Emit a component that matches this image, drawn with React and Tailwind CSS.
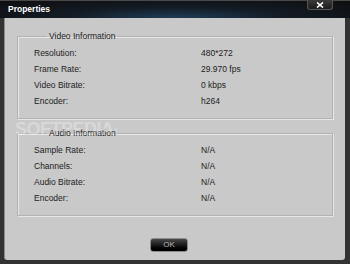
import React from "react";

const videoInfo = [
  { label: "Resolution:", value: "480*272" },
  { label: "Frame Rate:", value: "29.970 fps" },
  { label: "Video Bitrate:", value: "0 kbps" },
  { label: "Encoder:", value: "h264" },
];

const audioInfo = [
  { label: "Sample Rate:", value: "N/A" },
  { label: "Channels:", value: "N/A" },
  { label: "Audio Bitrate:", value: "N/A" },
  { label: "Encoder:", value: "N/A" },
];

const InfoGroup = ({ title, rows, className = "" }) => (
  <fieldset
    className={`h-[88px] border border-[#b2b2b2] shadow-[inset_1px_1px_0_#e6e6e6,1px_1px_0_#e6e6e6] pl-[16px] ${className}`}
  >
    <legend className="ml-[13px] px-[2px] h-[10px] leading-[10px] text-[8.5px] text-[#1c1c1c]">
      {title}
    </legend>
    <div className="pt-[4px]">
      {rows.map((r) => (
        <div key={r.label} className="flex h-[16px] items-center text-[8.5px] text-[#1c1c1c]">
          <span className="w-[167px]">{r.label}</span>
          <span>{r.value}</span>
        </div>
      ))}
    </div>
  </fieldset>
);

export default function App() {
  return (
    <div
      className="relative w-[350px] h-[264px] bg-[#333333] flex flex-col overflow-hidden"
      style={{ fontFamily: '"Liberation Sans", Arial, sans-serif' }}
    >
      {/* Title bar */}
      <div className="h-[18px] flex justify-between bg-[radial-gradient(ellipse_at_50%_100%,#1f3d57_0%,#131b24_45%,#0e0e0f_100%)] border-t border-[#4a4a4a]">
        <span className="pl-[8px] pt-[3px] text-[8.5px] font-bold text-white leading-[10px]">
          Properties
        </span>
        <button className="mr-[17px] w-[26px] h-[10px] -mt-px rounded-b-[3px] bg-gradient-to-b from-[#3a3a3a] to-[#1c1c1c] border border-t-0 border-[#555] flex items-center justify-center">
          <svg width="8" height="6" viewBox="0 0 8 6">
            <path d="M1 0.5 L7 5.5 M7 0.5 L1 5.5" stroke="#fff" strokeWidth="1.6" />
          </svg>
        </button>
      </div>

      {/* Body */}
      <div className="ml-[4px] mr-[5px] h-[242px] bg-[#c9c9c9] rounded-b-[3px] border-l border-[#8a8a8a] px-[12px] pt-[13px] flex flex-col">
        <InfoGroup title="Video Information" rows={videoInfo} />
        <InfoGroup title="Audio Information" rows={audioInfo} className="mt-[9px]" />
        <div className="mt-[14px]">
          <button className="ml-[133px] w-[38px] h-[14px] rounded-[3px] bg-gradient-to-b from-[#4a4a4a] via-[#1a1a1a] to-[#000] border border-[#8c8c8c] text-[8px] leading-[12px] text-[#b5b5b5]">
            OK
          </button>
        </div>
      </div>

      {/* watermark */}
      <div className="absolute left-[15px] top-[120px] text-[18px] font-bold tracking-[-0.5px] text-white/30 leading-none pointer-events-none">
        SOFTPEDIA<sup className="text-[6px]">®</sup>
      </div>
    </div>
  );
}
